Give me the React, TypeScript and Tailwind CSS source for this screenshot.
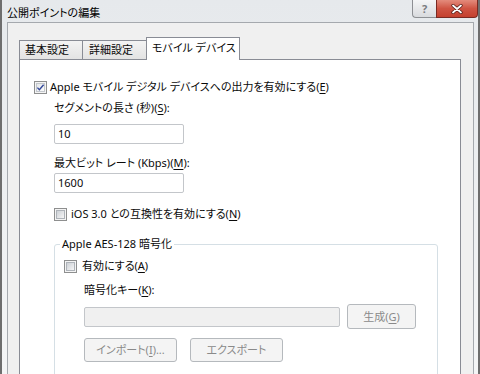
import React from "react";

const F = "font-['Noto_Sans','Noto_Sans_CJK_JP',sans-serif] [font-feature-settings:'palt'] text-[11px] leading-[16px]";

function Check({ checked }: { checked?: boolean }) {
  return (
    <span className="relative inline-flex h-[13px] w-[13px] shrink-0 items-center justify-center border border-[#8e8f8f] bg-[#f4f4f4]">
      {checked ? (
        <span className="h-[9px] w-[9px] border border-[#c3c7cc] bg-gradient-to-br from-[#e4e7ea] to-[#fbfbfb]" />
      ) : (
        <span className="h-[9px] w-[9px] border border-[#aeb3b9] bg-gradient-to-br from-[#cdd1d6] to-[#f6f6f6]" />
      )}
      {checked && (
        <svg className="absolute left-0 top-0" width="11" height="11" viewBox="0 0 11 11">
          <path d="M2.4 5.6 L4.4 7.8 L8.6 2.8" fill="none" stroke="#33489a" strokeWidth="1.4" />
        </svg>
      )}
    </span>
  );
}

function U({ c }: { c: string }) {
  return <span className="underline underline-offset-[2px]">{c}</span>;
}

function Btn({ children, w }: { children: React.ReactNode; w: string }) {
  return (
    <div className={`${w} flex shrink-0 items-center justify-center rounded-[3px] border border-[#b5b9bd] bg-[#f4f4f4] text-[#8a8a8a]`}>
      {children}
    </div>
  );
}

export default function App() {
  return (
    <div className={`${F} flex h-[374px] w-[480px] flex-col overflow-hidden border-l-2 border-r-2 border-[#6e6e6e] bg-gradient-to-b from-[#e6e9ec] to-[#f4f5f6] text-[#0a0a0a]`}>
      {/* title bar */}
      <div className="flex h-[22px] shrink-0 items-start justify-between">
        <div className="pl-[5px] pt-[5px] text-black">公開ポイントの編集</div>
        <div className="flex">
          <div className="flex h-[18px] w-[24px] items-center justify-center rounded-bl-[4px] border border-t-0 border-r-0 border-[#8d8f93] bg-gradient-to-b from-[#f4f5f6] to-[#d9dbde]">
            <span className="text-[11px] font-bold leading-none text-[#7a7c80]">?</span>
          </div>
          <div className="flex h-[18px] w-[42px] items-center justify-center rounded-br-[4px] border border-t-0 border-[#7a2a22] bg-gradient-to-b from-[#e38b7c] via-[#cf5443] to-[#c4402e]">
            <svg width="12" height="10" viewBox="0 0 12 10">
              <path d="M2 1.5 L10 8.5 M10 1.5 L2 8.5" stroke="#4a1510" strokeWidth="3.2" strokeLinecap="round" />
              <path d="M2 1.5 L10 8.5 M10 1.5 L2 8.5" stroke="#ffffff" strokeWidth="1.8" strokeLinecap="round" />
            </svg>
          </div>
        </div>
      </div>
      {/* client */}
      <div className="ml-[5px] mr-[4px] flex flex-1 flex-col border-l border-t border-r border-[#a5a9ae] bg-[#f0f0f0]">
        {/* tabs */}
        <div className="ml-[11px] mt-[14px] flex h-[22px] items-end">
          <div className="flex h-[19px] w-[64px] items-center whitespace-nowrap border border-b-0 border-[#898c95] bg-gradient-to-b from-[#f3f3f3] to-[#e3e3e3] pb-[1px] pl-[5px]">基本設定</div>
          <div className="-ml-px flex h-[19px] w-[65px] items-center whitespace-nowrap border border-b-0 border-[#898c95] bg-gradient-to-b from-[#f3f3f3] to-[#e3e3e3] pb-[1px] pl-[6px]">詳細設定</div>
          <div className="relative z-10 -mb-px -ml-px flex h-[23px] w-[94px] items-center whitespace-nowrap border border-b-0 border-[#898c95] bg-white pb-[3px] pl-[5px]">モバイル デバイス</div>
        </div>
        {/* panel */}
        <div className="ml-[11px] mr-[12px] flex-1 border border-b-0 border-[#898c95] bg-white pl-[14px]">
          <div className="mt-[19px] flex h-[16px] items-center gap-[3px]">
            <Check checked />
            <span className="whitespace-nowrap">Apple モバイル デジタル デバイスへの出力を有効にする(<U c="E" />)</span>
          </div>
          <div className="ml-[20px]">
            <div className="mt-[5px] h-[16px]">セグメントの長さ (秒)(<U c="S" />):</div>
            <div className="mt-[8px] flex h-[20px] w-[130px] items-center rounded-[2px] border border-[#c3c6ca] bg-white pl-[3px]">10</div>
            <div className="mt-[11px] h-[16px]">最大ビット レート (Kbps)(<U c="M" />):</div>
            <div className="mt-[2px] flex h-[20px] w-[130px] items-center rounded-[2px] border border-[#c3c6ca] bg-white pl-[3px]">1600</div>
            <div className="mt-[13px] flex h-[16px] items-center gap-[3px]">
              <Check />
              <span className="ml-[1px]">iOS 3.0 との互換性を有効にする(<U c="N" />)</span>
            </div>
            <fieldset className="mt-[14px] w-[384px] rounded-[3px] border border-[#d5dfe5] pb-[40px] pl-[9px]">
              <legend className="ml-[-4px] px-[2px] leading-[16px]">Apple AES-128 暗号化</legend>
              <div className="mt-[6px] flex h-[16px] items-center gap-[3px]">
                <Check />
                <span className="ml-[2px]">有効にする(<U c="A" />)</span>
              </div>
              <div className="ml-[20px]">
                <div className="mt-[8px] h-[16px]">暗号化キー(<U c="K" />):</div>
                <div className="mt-[6px] flex items-center gap-[7px]">
                  <div className="h-[20px] w-[256px] rounded-[2px] border border-[#c3c6ca] bg-[#f0f0f0]" />
                  <Btn w="w-[69px] h-[25px]">
                    <span>生成(<U c="G" />)</span>
                  </Btn>
                </div>
                <div className="mt-[9px] flex gap-[13px]">
                  <Btn w="w-[93px] h-[24px]">
                    <span>インポート(<U c="I" />)...</span>
                  </Btn>
                  <Btn w="w-[93px] h-[24px]">
                    <span>エクスポート</span>
                  </Btn>
                </div>
              </div>
            </fieldset>
          </div>
        </div>
      </div>
    </div>
  );
}
